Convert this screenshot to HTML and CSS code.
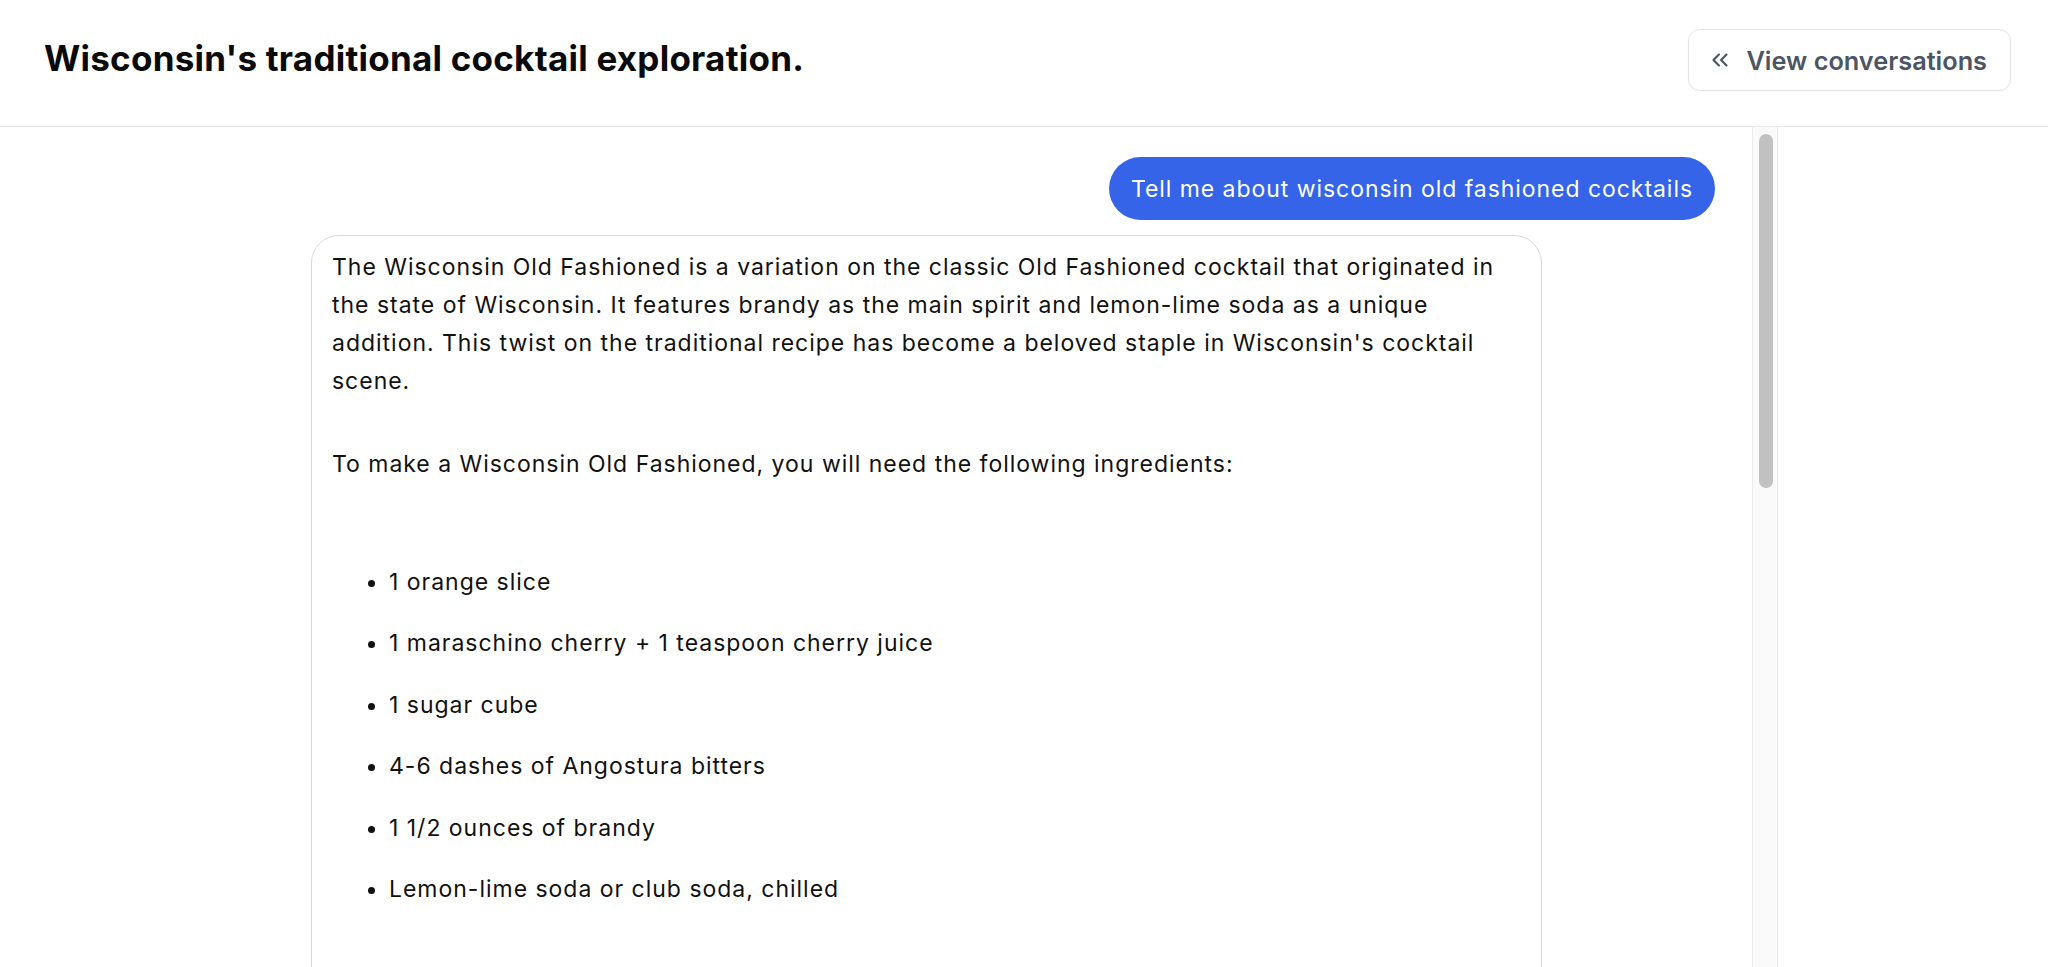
FILE: index.html
```html
<!DOCTYPE html>
<html lang="en">
<head>
<meta charset="utf-8">
<title>Wisconsin's traditional cocktail exploration.</title>
<link rel="stylesheet" href="styles.css">
</head>
<body>
<div class="app">
  <header class="topbar">
    <h1 class="title">Wisconsin's traditional cocktail exploration.</h1>
    <button class="view-btn" type="button">
      <svg class="chev" viewBox="0 0 24 24" width="26" height="26" fill="none" stroke="currentColor" stroke-width="2" stroke-linecap="round" stroke-linejoin="round"><path d="m11 17-5-5 5-5"/><path d="m18 17-5-5 5-5"/></svg>
      <span>View conversations</span>
    </button>
  </header>
  <div class="main">
    <section class="chat">
      <div class="user-row">
        <div class="user-bubble">Tell me about wisconsin old fashioned cocktails</div>
      </div>
      <div class="bot-bubble">
        <p>The Wisconsin Old Fashioned is a variation on the classic Old Fashioned cocktail that originated in the state of Wisconsin. It features brandy as the main spirit and lemon-lime soda as a unique addition. This twist on the traditional recipe has become a beloved staple in Wisconsin's cocktail scene.</p>
        <p>To make a Wisconsin Old Fashioned, you will need the following ingredients:</p>
        <ul>
          <li>1 orange slice</li>
          <li>1 maraschino cherry + 1 teaspoon cherry juice</li>
          <li>1 sugar cube</li>
          <li>4-6 dashes of Angostura bitters</li>
          <li>1 1/2 ounces of brandy</li>
          <li>Lemon-lime soda or club soda, chilled</li>
        </ul>
      </div>
    </section>
    <div class="scrollbar"><div class="thumb"></div></div>
    <div class="spacer"></div>
  </div>
</div>
</body>
</html>
```
FILE: styles.css
```css
html, body {
  margin: 0;
  padding: 0;
  height: 100%;
  background: #ffffff;
  overflow: hidden;
}
body {
  font-family: Inter, "Noto Sans", "Liberation Sans", sans-serif;
  color: #111111;
}
.app {
  display: flex;
  flex-direction: column;
  height: 100vh;
}
.topbar {
  box-sizing: border-box;
  height: 127px;
  flex: 0 0 auto;
  display: flex;
  justify-content: space-between;
  align-items: flex-start;
  padding: 29px 37px 0 44px;
  border-bottom: 1px solid #e5e7eb;
}
.title {
  margin: 8px 0 0 0;
  font-size: 35px;
  line-height: 42px;
  font-weight: 700;
  color: #0a0a0a;
  letter-spacing: 0.24px;
}
.view-btn {
  box-sizing: border-box;
  height: 62px;
  display: flex;
  align-items: center;
  gap: 13px;
  padding: 0 23px 0 18px;
  background: #ffffff;
  border: 1px solid #e3e5e9;
  border-radius: 12px;
  font-family: Inter, "Noto Sans", "Liberation Sans", sans-serif;
  font-size: 25.3px;
  font-weight: 600;
  color: #4b5563;
  box-shadow: 0 1px 2px rgba(0,0,0,0.03);
}
.chev {
  display: block;
  flex: 0 0 auto;
}
.main {
  flex: 1 1 auto;
  min-height: 0;
  display: flex;
}
.chat {
  box-sizing: border-box;
  width: 1752px;
  flex: 0 0 auto;
  overflow: hidden;
  padding: 30px 37px 0 311px;
  display: flex;
  flex-direction: column;
}
.user-row {
  display: flex;
  justify-content: flex-end;
}
.user-bubble {
  background: #3564e8;
  color: #ffffff;
  font-size: 23px;
  letter-spacing: 0.95px;
  line-height: 38px;
  padding: 12.5px 22px;
  border-radius: 32px;
  white-space: nowrap;
}
.bot-bubble {
  box-sizing: border-box;
  width: 1231px;
  margin-top: 15px;
  border: 1px solid #d6d8dd;
  border-radius: 28px;
  padding: 12px 12px 300px 20px;
  font-size: 23px;
  letter-spacing: 0.98px;
  line-height: 38px;
  color: #111111;
  flex: 0 0 auto;
}
.bot-bubble p {
  margin: 0;
}
.bot-bubble p + p {
  margin-top: 44.7px;
}
.bot-bubble ul {
  margin: 80px 0 0 0;
  padding-left: 57px;
}
.bot-bubble li + li {
  margin-top: 23.5px;
}
.scrollbar {
  box-sizing: border-box;
  width: 26px;
  flex: 0 0 auto;
  background: #fafafa;
  border-left: 1px solid #ebebeb;
  border-right: 1px solid #ebebeb;
  padding: 7px 3px 0 6px;
}
.thumb {
  width: 14px;
  height: 354px;
  background: #c1c1c1;
  border-radius: 7px;
}
.spacer {
  flex: 1 1 auto;
}
```
